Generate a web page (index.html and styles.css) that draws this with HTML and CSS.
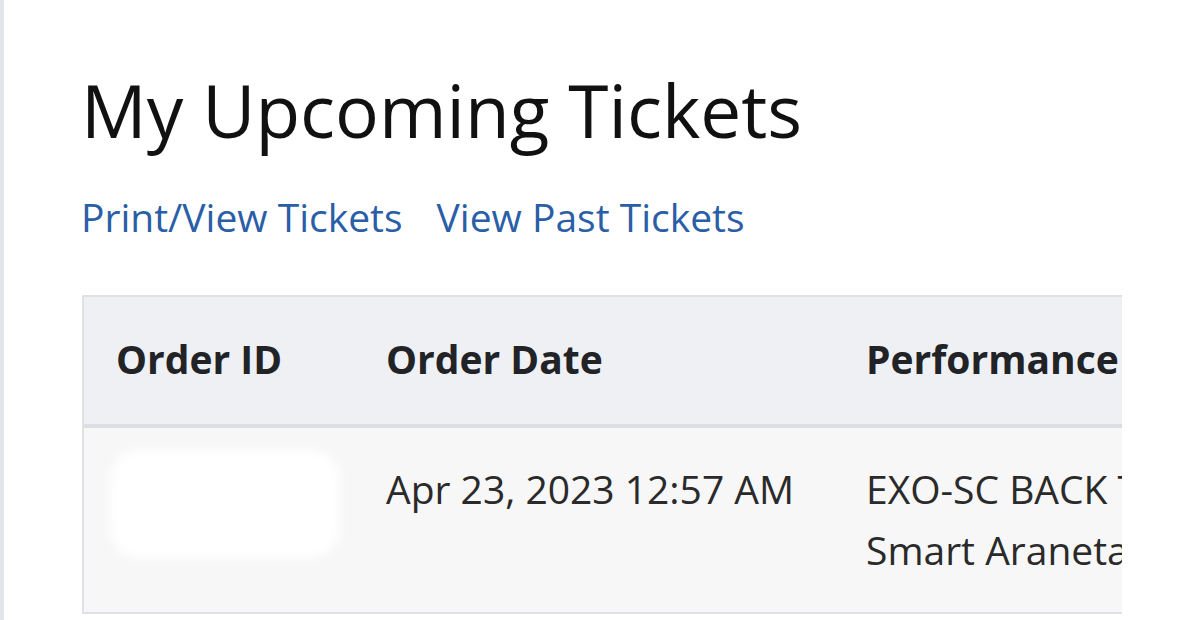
FILE: index.html
```html
<!DOCTYPE html>
<html lang="en">
<head>
    <meta charset="UTF-8">
    <meta name="viewport" content="width=device-width, initial-scale=1.0">
    <title>My Upcoming Tickets</title>
    <link rel="stylesheet" href="styles.css">
</head>
<body>
    <div class="page">
        <h1>My Upcoming Tickets</h1>

        <div class="ticket-links">
            <a href="#">Print/View Tickets</a>
            <a href="#">View Past Tickets</a>
        </div>

        <div class="table-wrap">
            <table class="orders">
                <colgroup>
                    <col class="col-id">
                    <col class="col-date">
                    <col class="col-perf">
                </colgroup>
                <thead>
                    <tr>
                        <th>Order ID</th>
                        <th>Order Date</th>
                        <th>Performance</th>
                    </tr>
                </thead>
                <tbody>
                    <tr>
                        <td>
                            <!-- order number hidden under a smudge -->
                            <span class="order-id">3W7150A1K</span>
                        </td>
                        <td>Apr 23, 2023 12:57 AM</td>
                        <td>EXO-SC BACK TO BACK<br>Smart Araneta Coliseum</td>
                    </tr>
                </tbody>
            </table>
        </div>
    </div>
</body>
</html>
```

FILE: styles.css
```css
body {
    font-family: 'Open Sans', 'Noto Sans', sans-serif;
    background: white;
    margin: 0;
}

.page {
    border-left: 4px solid #e3e5ea;
    min-height: 620px;
    box-sizing: border-box;
    padding: 60px 0 0 77px;
}

h1 {
    font-size: 73px;
    font-weight: 400;
    color: #111;
    margin: 0;
    line-height: 100px;
}

.ticket-links {
    margin-top: 27px;
    display: flex;
    gap: 34px;
}

.ticket-links a {
    font-size: 39px;
    color: #2a5ea6;
    text-decoration: none;
    line-height: 60px;
}

.table-wrap {
    margin-top: 48px;
    margin-left: 1px;
    width: 1038px;
    overflow: hidden;
    border: 2px solid #dfe1e5;
    border-right: none;
}

.orders {
    width: 1500px;
    table-layout: fixed;
    border-collapse: collapse;
    font-size: 39px;
    line-height: 61px;
}

.col-id { width: 270px; }
.col-date { width: 480px; }
.col-perf { width: 750px; }

.orders th {
    background: #eef0f4;
    color: #212327;
    font-weight: 700;
    text-align: left;
    padding: 31px 32px 35px;
    border-bottom: 4px solid #dcdee3;
    white-space: nowrap;
}

.orders td {
    background: #f7f7f7;
    color: #2a2a2a;
    vertical-align: top;
    padding: 30px 32px 32px;
    white-space: nowrap;
}

.order-id {
    position: relative;
    color: #ececec;
}

/* white smudge over the order number */
.order-id::after {
    content: "";
    position: absolute;
    left: -6px;
    top: -12px;
    width: 230px;
    height: 108px;
    background: white;
    border-radius: 30px;
    filter: blur(6px);
}
```
